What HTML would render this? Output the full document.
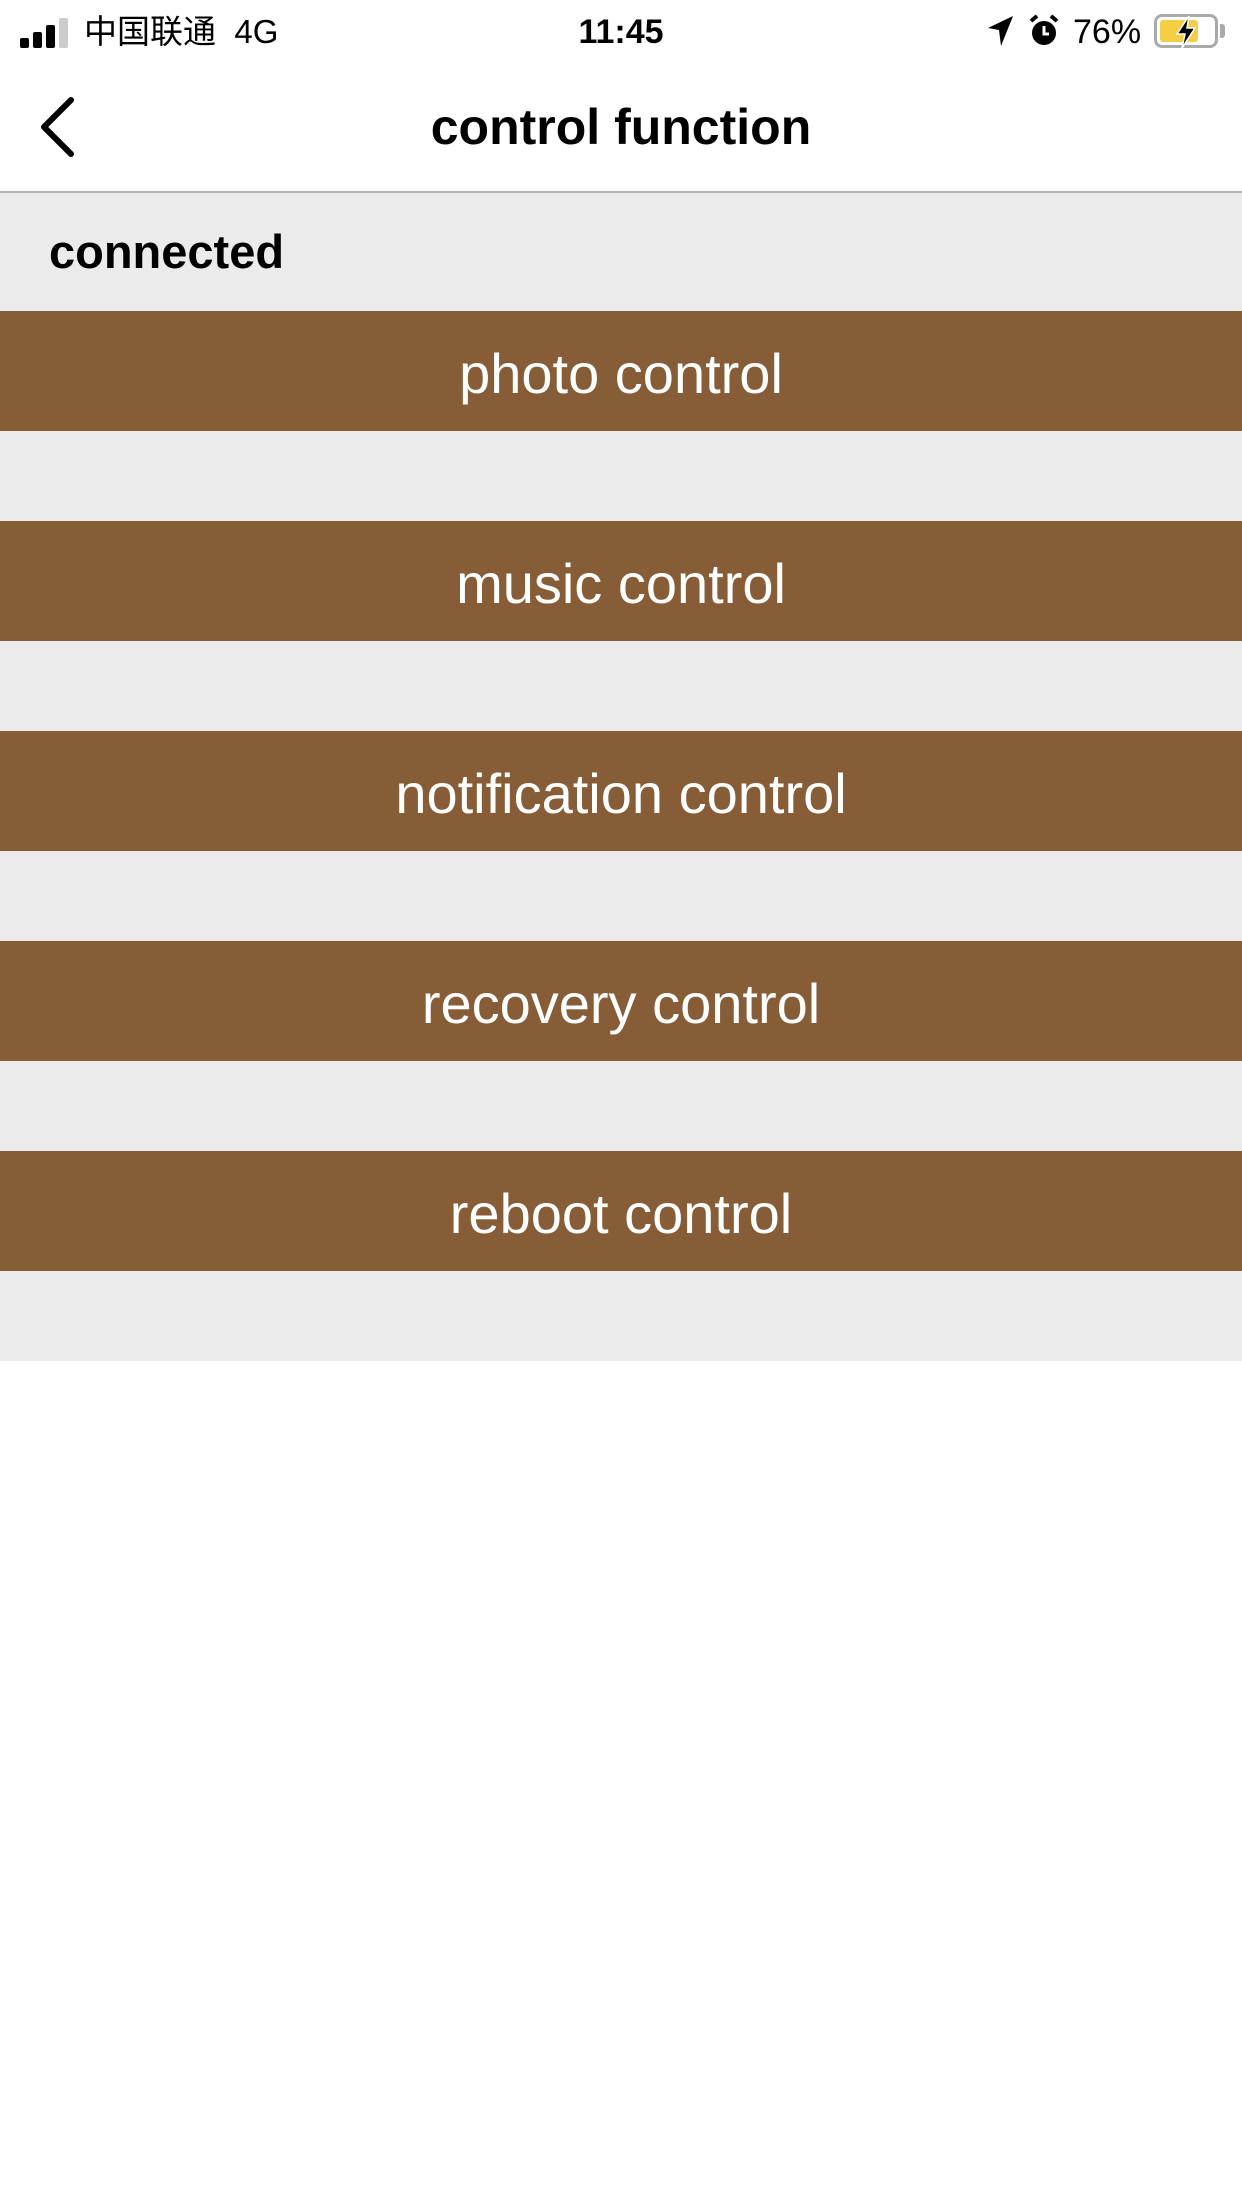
<!DOCTYPE html>
<html><head><meta charset="utf-8"><style>
*{margin:0;padding:0;box-sizing:border-box}
body{width:1242px;height:2208px;background:#fff;font-family:"Liberation Sans","Noto Sans CJK SC",sans-serif;position:relative;overflow:hidden}
.abs{position:absolute}
.btn{position:absolute;left:0;width:1242px;height:120px;background:#865D36;color:#fff;font-size:56px;text-align:center;line-height:126px}
</style></head><body>
<div class="abs" style="left:20px;top:18px;width:70px;height:30px">
<div class="abs" style="left:0;top:20px;width:9px;height:10px;background:#000;border-radius:2px"></div>
<div class="abs" style="left:13px;top:14px;width:9px;height:16px;background:#000;border-radius:2px"></div>
<div class="abs" style="left:26px;top:7px;width:9px;height:23px;background:#000;border-radius:2px"></div>
<div class="abs" style="left:39px;top:0;width:9px;height:30px;background:#ccc;border-radius:2px"></div>
</div>
<div class="abs" style="left:84px;top:10px;font-size:33px;line-height:44px">中国联通&nbsp;&nbsp;4G</div>
<div class="abs" style="left:0;width:1242px;top:10px;font-size:34px;font-weight:bold;line-height:44px;text-align:center">11:45</div>
<svg class="abs" style="left:985px;top:14px" width="30" height="34" viewBox="0 0 30 34"><path d="M28 2 L3 14 L14 16 L16 32 Z" fill="#000"/></svg>
<svg class="abs" style="left:1028px;top:13px" width="32" height="36" viewBox="0 0 32 36"><circle cx="16" cy="20" r="12" fill="#000"/><path d="M3 8 L9 3 M29 8 L23 3" stroke="#000" stroke-width="4"/><path d="M16 13 V21 H21" stroke="#fff" stroke-width="3" fill="none"/></svg>
<div class="abs" style="left:1073px;top:10px;font-size:34px;line-height:44px">76%</div>
<div class="abs" style="left:1154px;top:14px;width:64px;height:34px;border:3px solid #aaa;border-radius:8px">
<div class="abs" style="left:3px;top:3px;width:38px;height:22px;background:#F5CE45;border-radius:3px"></div>
<svg class="abs" style="left:14px;top:-2px" width="30" height="34" viewBox="0 0 30 34"><path d="M18 1 L6 19 H14 L11 33 L24 13 H16 Z" fill="#000" stroke="#fff" stroke-width="1.5"/></svg>
</div>
<div class="abs" style="left:1220px;top:24px;width:5px;height:14px;background:#aaa;border-radius:0 3px 3px 0"></div>
<svg class="abs" style="left:34px;top:94px" width="46" height="66" viewBox="0 0 46 66"><path d="M37 6 L10 33 L37 60" stroke="#000" stroke-width="6" fill="none" stroke-linecap="round" stroke-linejoin="round"/></svg>
<div class="abs" style="left:0;width:1242px;top:95px;font-size:50px;font-weight:bold;line-height:64px;text-align:center">control function</div>
<div class="abs" style="left:0;top:191px;width:1242px;height:2px;background:#B4B4B4"></div>
<div class="abs" style="left:0;top:193px;width:1242px;height:1168px;background:#EBEBEB"></div>
<div class="abs" style="left:49px;top:222px;font-size:47px;font-weight:bold;line-height:60px">connected</div>
<div class="btn" style="top:311px">photo control</div>
<div class="btn" style="top:521px">music control</div>
<div class="btn" style="top:731px">notification control</div>
<div class="btn" style="top:941px">recovery control</div>
<div class="btn" style="top:1151px">reboot control</div>
</body></html>
